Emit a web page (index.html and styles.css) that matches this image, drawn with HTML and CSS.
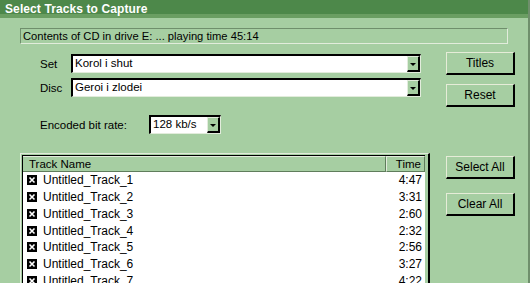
FILE: index.html
```html
<!DOCTYPE html>
<html lang="en">
<head>
  <meta charset="UTF-8" />
  <title>Select Tracks to Capture</title>
  <link rel="stylesheet" href="styles.css">
</head>
<body>
  <div class="window">
    <div class="titlebar">Select Tracks to Capture</div>

    <div class="status">Contents of CD in drive E: ... playing time 45:14</div>

    <div class="section">
      <div class="fields">
        <div class="field">
          <span class="label">Set</span>
          <div class="combo wide"><span class="value">Korol i shut</span><span class="arrow"></span></div>
        </div>
        <div class="field">
          <span class="label">Disc</span>
          <div class="combo wide"><span class="value">Geroi i zlodei</span><span class="arrow"></span></div>
        </div>
        <div class="field bitrate">
          <span class="label long">Encoded bit rate:</span>
          <div class="combo small"><span class="value">128 kb/s</span><span class="arrow"></span></div>
        </div>
      </div>
      <div class="buttons">
        <button class="btn">Titles</button>
        <button class="btn">Reset</button>
      </div>
    </div>

    <div class="section">
      <div class="listframe">
        <div class="list">
          <div class="list-head">
            <span class="col-name">Track Name</span>
            <span class="col-time">Time</span>
          </div>
          <div class="rows" id="rows"></div>
        </div>
      </div>
      <div class="buttons lower">
        <button class="btn">Select All</button>
        <button class="btn">Clear All</button>
      </div>
    </div>
  </div>

  <script>
    const tracks = [
      ['Untitled_Track_1', '4:47'],
      ['Untitled_Track_2', '3:31'],
      ['Untitled_Track_3', '2:60'],
      ['Untitled_Track_4', '2:32'],
      ['Untitled_Track_5', '2:56'],
      ['Untitled_Track_6', '3:27'],
      ['Untitled_Track_7', '4:22']
    ];
    const rows = document.getElementById('rows');
    rows.innerHTML = tracks.map(t => `
      <div class="row">
        <span class="check"><svg width="10" height="10" viewBox="0 0 10 10"><rect width="10" height="10" fill="#000"/><path d="M2.5 2.5 L7.5 7.5 M7.5 2.5 L2.5 7.5" stroke="#fff" stroke-width="1.6"/></svg></span>
        <span class="name">${t[0]}</span>
        <span class="time">${t[1]}</span>
      </div>`).join('');
  </script>
</body>
</html>
```

FILE: styles.css
```css
* {
  margin: 0;
  padding: 0;
  box-sizing: border-box;
}

body {
  font-family: 'Liberation Sans', Arial, sans-serif;
  font-size: 11px;
  color: #000;
  background: #a6cea2;
  overflow: hidden;
}

.window {
  width: 530px;
  height: 283px;
  background: #a6cea2;
  border-right: 2px solid #6f8f6c;
}

.titlebar {
  height: 18px;
  background: linear-gradient(#4d884a 0, #4d884a 14px, #6a9e62 14px, #6a9e62 18px);
  color: #fff;
  font-weight: bold;
  font-size: 12px;
  line-height: 18px;
  padding-left: 5px;
  letter-spacing: 0.1px;
}

.status {
  margin: 10px 20px 0 20px;
  height: 16px;
  line-height: 14px;
  padding-left: 2px;
  font-size: 11.2px;
  border-top: 1px solid #6f8f6c;
  border-left: 1px solid #6f8f6c;
  border-right: 1px solid #e2ecdc;
  border-bottom: 1px solid #e2ecdc;
}

.section {
  display: flex;
  padding-left: 20px;
}

.fields {
  width: 410px;
  padding-left: 20px;
  padding-top: 10px;
}

.field {
  display: flex;
  align-items: center;
  height: 19px;
  margin-bottom: 5px;
}

.field.bitrate {
  margin-top: 18px;
}

.label {
  width: 31px;
  font-size: 11.5px;
}

.label.long {
  width: 109px;
}

.combo {
  display: flex;
  height: 19px;
  background: #fff;
  border-top: 2px solid #000;
  border-left: 2px solid #000;
  border-right: 1px solid #e2ecdc;
  border-bottom: 1px solid #e2ecdc;
}

.combo.wide {
  width: 350px;
}

.combo.small {
  width: 72px;
}

.combo .value {
  flex: 1;
  padding-left: 2px;
  line-height: 15px;
  font-size: 11.5px;
}

.arrow {
  width: 13px;
  height: 16px;
  background: #a6cea2;
  border-right: 2px solid #000;
  border-bottom: 2px solid #000;
  border-top: 1px solid #e2ecdc;
  border-left: 1px solid #e2ecdc;
  position: relative;
}

.arrow::after {
  content: '';
  position: absolute;
  left: 2px;
  top: 6px;
  border-left: 3px solid transparent;
  border-right: 3px solid transparent;
  border-top: 3px solid #000;
}

.buttons {
  display: flex;
  flex-direction: column;
  gap: 9px;
  margin-left: 16px;
  padding-top: 8px;
}

.buttons.lower {
  padding-top: 17px;
  gap: 14px;
}

.btn {
  width: 69px;
  height: 23px;
  font-family: inherit;
  font-size: 12px;
  background: #a6cea2;
  border-top: 1px solid #e6ecd8;
  border-left: 1px solid #e6ecd8;
  border-right: 2px solid #000;
  border-bottom: 2px solid #000;
  color: #000;
}

.listframe {
  width: 410px;
  margin-top: 14px;
  height: 140px;
  border-top: 1px solid #e2ecdc;
  border-left: 1px solid #e2ecdc;
  border-right: 2px solid #000;
}

.list {
  margin: 1px 3px 0 1px;
  border-top: 1px solid #000;
  border-left: 1px solid #000;
  background: #fff;
  height: 140px;
}

.list-head {
  display: flex;
  height: 16px;
  line-height: 14px;
  font-size: 11.5px;
  background: #a6cea2;
}

.col-name {
  flex: 1;
  padding-left: 6px;
  border-right: 1px solid #5f7d5c;
  border-bottom: 1px solid #5f7d5c;
  border-top: 1px solid #e2ecdc;
}

.col-time {
  width: 39px;
  text-align: right;
  padding-right: 3px;
  border-right: 1px solid #5f7d5c;
  border-bottom: 1px solid #5f7d5c;
  border-top: 1px solid #e2ecdc;
  border-left: 1px solid #e2ecdc;
}

.row {
  display: flex;
  align-items: center;
  height: 16.75px;
  font-size: 12px;
}

.check {
  width: 10px;
  height: 10px;
  margin-left: 4px;
  margin-right: 6px;
  display: flex;
}

.name {
  flex: 1;
}

.time {
  width: 40px;
  text-align: right;
  padding-right: 3px;
}
```
